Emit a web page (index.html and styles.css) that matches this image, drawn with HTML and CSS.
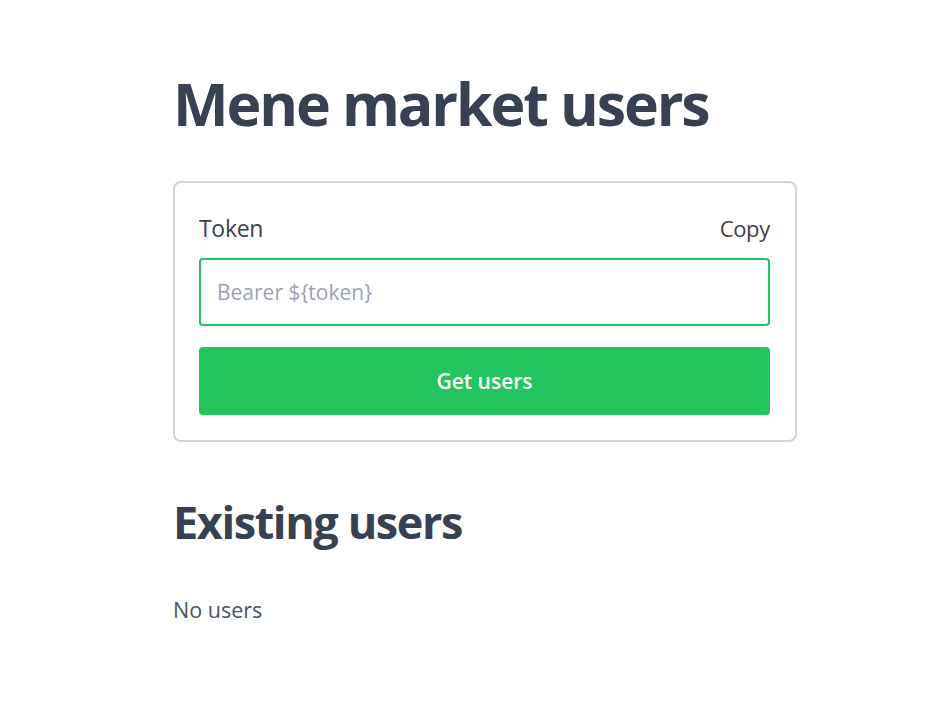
FILE: index.html
```html
<!DOCTYPE html>
<html lang="en">
<head>
<meta charset="utf-8">
<title>Mene market users</title>
<link rel="stylesheet" href="styles.css">
</head>
<body>
<main class="page">
  <h1 class="title">Mene market users</h1>
  <section class="card">
    <div class="label-row">
      <label class="label" for="token">Token</label>
      <span class="copy">Copy</span>
    </div>
    <input id="token" class="input" type="text" placeholder="Bearer ${token}">
    <button class="btn" type="button">Get users</button>
  </section>
  <h2 class="subtitle">Existing users</h2>
  <p class="empty">No users</p>
</main>
</body>
</html>
```

FILE: styles.css
```css
* { box-sizing: border-box; }
html, body { margin: 0; padding: 0; background: #ffffff; }
body {
  font-family: "Open Sans", "Noto Sans", sans-serif;
  color: #374151;
}
.page {
  width: 624px;
  margin-left: 173px;
  padding-top: 66px;
  display: flex;
  flex-direction: column;
}
.title {
  margin: 0;
  font-size: 59px;
  line-height: 74px;
  font-weight: 700;
  color: #374151;
  letter-spacing: -2.1px;
}
.card {
  margin-top: 41px;
  border: 2px solid #d1d5db;
  border-radius: 8px;
  padding: 24px 25px 25px 24px;
  display: flex;
  flex-direction: column;
}
.label-row {
  display: flex;
  justify-content: space-between;
  align-items: center;
  height: 41px;
  margin-bottom: 10px;
}
.label {
  font-size: 23px;
  color: #374151;
  letter-spacing: -0.3px;
}
.copy {
  font-size: 22px;
  color: #3f3f46;
  cursor: pointer;
  letter-spacing: -0.3px;
}
.input {
  height: 68px;
  border: 2px solid #22c55e;
  border-radius: 4px;
  padding: 0 16px;
  font-family: inherit;
  font-size: 21px;
  color: #374151;
  outline: none;
}
.input::placeholder { color: #9ca3af; }
.btn {
  margin-top: 21px;
  height: 68px;
  border: none;
  border-radius: 4px;
  background: #22c55e;
  color: #ffffff;
  font-family: inherit;
  font-size: 21px;
  font-weight: 600;
  cursor: pointer;
}
.subtitle {
  margin: 50px 0 0;
  font-size: 45px;
  line-height: 60px;
  font-weight: 700;
  color: #374151;
  letter-spacing: -1.4px;
}
.empty {
  margin: 44px 0 0;
  font-size: 21.5px;
  line-height: 28px;
  color: #4b5563;
}
```
